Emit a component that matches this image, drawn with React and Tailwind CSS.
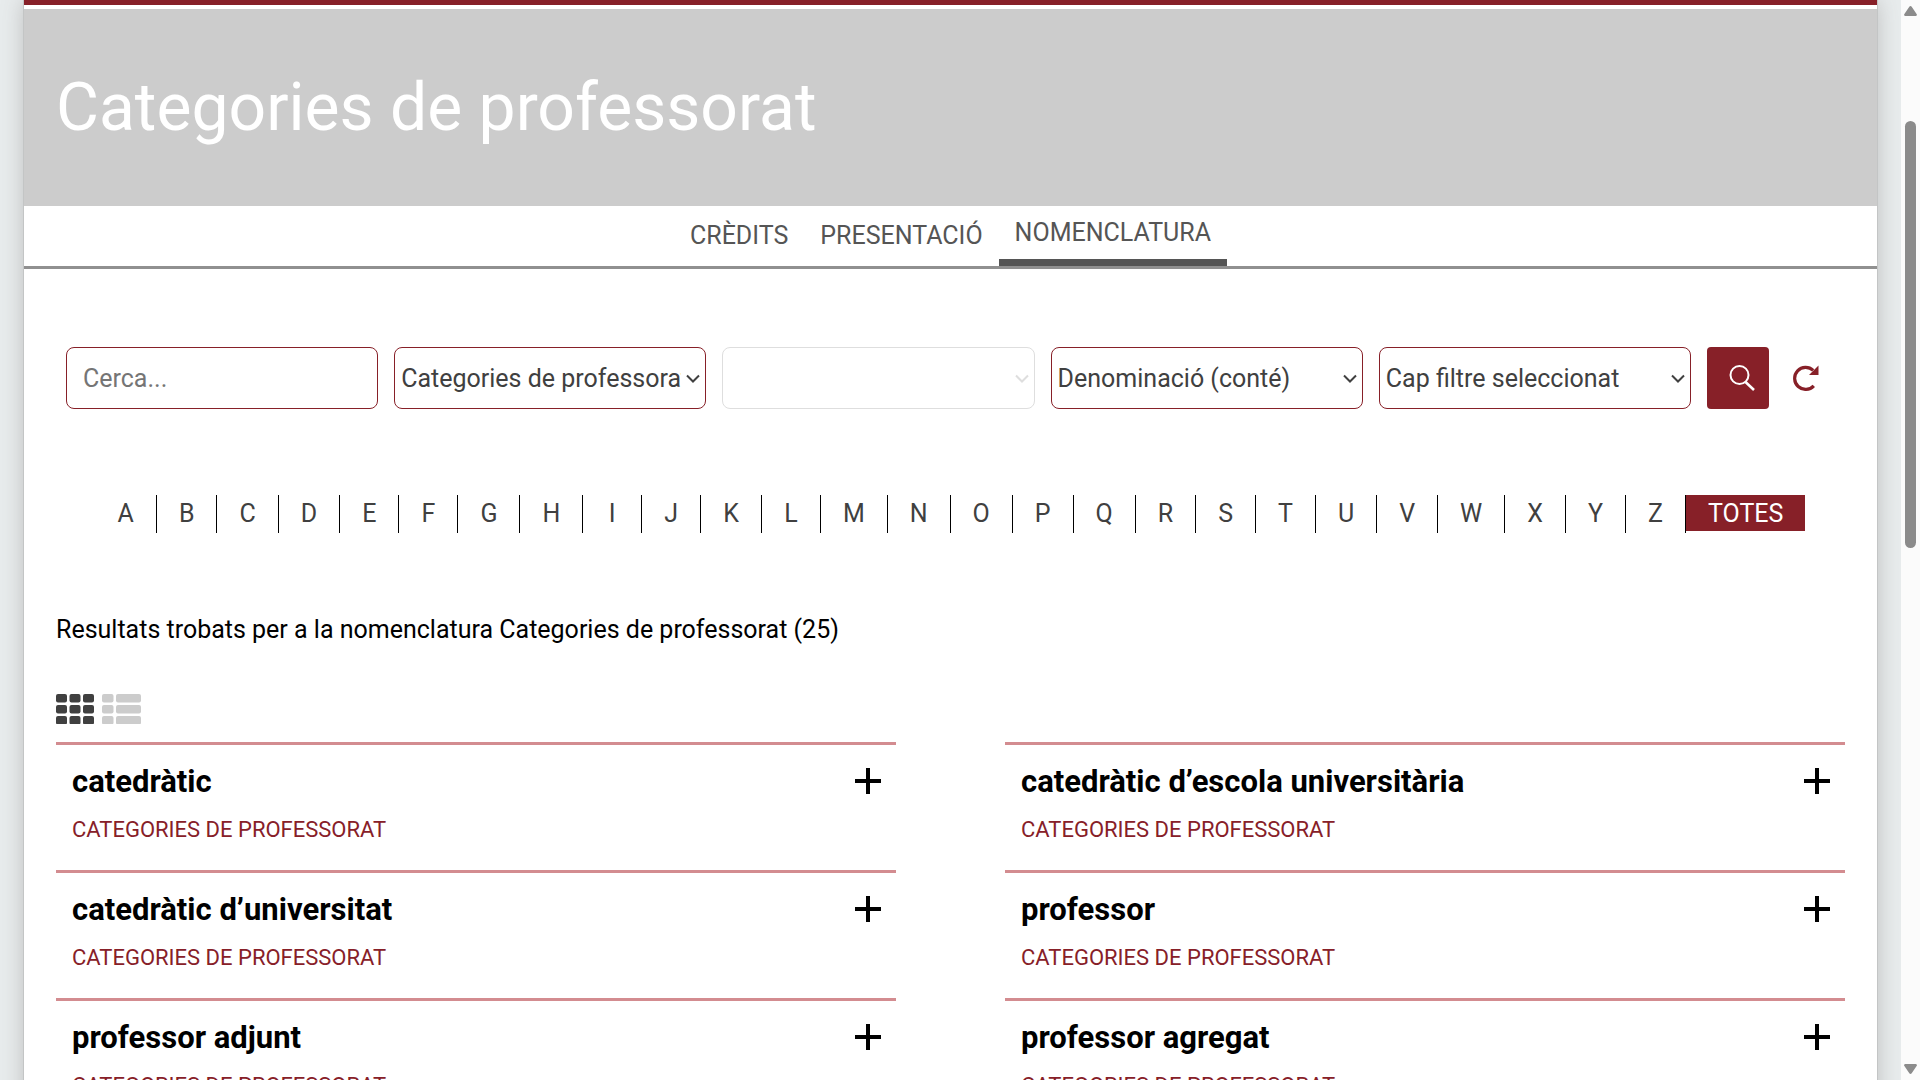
import { useState } from 'react';

const tabs = ['Crèdits', 'Presentació', 'Nomenclatura'];
const letters = 'ABCDEFGHIJKLMNOPQRSTUVWXYZ'.split('');

const terms = [
  'catedràtic',
  'catedràtic d’escola universitària',
  'catedràtic d’universitat',
  'professor',
  'professor adjunt',
  'professor agregat',
];

const Chevron = ({ className }) => (
  <svg className={className} width="14" height="10" viewBox="0 0 14 10" fill="none" stroke="currentColor" strokeWidth="2">
    <path d="M1 1.5 7 7.5 13 1.5" />
  </svg>
);

const SearchIcon = () => (
  <svg width="26" height="26" viewBox="0 0 26 26" fill="none" stroke="currentColor" strokeWidth="2">
    <circle cx="10.5" cy="10" r="9" />
    <path d="M16.5 17 25 25" strokeWidth="2.6" />
  </svg>
);

const ReloadIcon = () => (
  <svg width="26" height="26" viewBox="0 0 26 26" fill="none">
    <path d="M20.2 5.4A11 11 0 1 0 20.8 20.8" stroke="currentColor" strokeWidth="3.2" />
    <path d="M25.5 .5V10H16Z" fill="currentColor" />
  </svg>
);

const PlusIcon = () => (
  <svg width="26" height="26" viewBox="0 0 26 26" fill="none" stroke="currentColor" strokeWidth="4">
    <path d="M13 0V26M0 13H26" />
  </svg>
);

const GridIcon = () => (
  <svg width="38" height="30" viewBox="0 0 38 30" fill="currentColor">
    {[0, 11, 22].map((y) =>
      [0, 13.5, 27].map((x) => <rect key={`${x}-${y}`} x={x} y={y} width="11" height="8.5" rx="2" />)
    )}
  </svg>
);

const ListIcon = () => (
  <svg width="39" height="30" viewBox="0 0 39 30" fill="currentColor">
    {[0, 11, 22].map((y) => (
      <g key={y}>
        <rect x="0" y={y} width="11.5" height="8.5" rx="2" />
        <rect x="14" y={y} width="25" height="8.5" rx="2" />
      </g>
    ))}
  </svg>
);

const Select = ({ label, options, disabled }) => (
  <div className="relative flex-1 min-w-0">
    <select
      aria-label={label}
      disabled={disabled}
      className="appearance-none w-full h-[62px] rounded-lg border border-[#872028] bg-white pt-0.5 pl-[6px] pr-6 text-[25px] text-[#404040] disabled:border-[#dedede]"
    >
      {options.map((option) => (
        <option key={option}>{option}</option>
      ))}
    </select>
    <Chevron
      className={`absolute right-[6px] top-[27px] pointer-events-none ${disabled ? 'text-[#dedede]' : 'text-[#404040]'}`}
    />
  </div>
);

const TermCard = ({ name }) => (
  <article className="h-32 border-t-[3px] border-[#d38c90] pt-[17px] pl-4 pr-[15px]">
    <div className="flex items-center justify-between">
      <h2 className="pt-0.5 text-[31px] leading-9 font-bold">{name}</h2>
      <button type="button" aria-label={`Mostra ${name}`}>
        <PlusIcon />
      </button>
    </div>
    <p className="mt-[14px] text-[22px] leading-8 uppercase text-[#872028]">Categories de professorat</p>
  </article>
);

const Scrollbar = () => (
  <div className="w-[19px] shrink-0 flex flex-col items-center justify-between bg-[#fbfbfb] py-[6px] text-[#8b8b8b]" aria-hidden="true">
    <svg width="13" height="10" viewBox="0 0 13 10" fill="currentColor">
      <path d="M5.3.8a1.5 1.5 0 0 1 2.4 0L12.6 8a1.2 1.2 0 0 1-1 2H1.4a1.2 1.2 0 0 1-1-2Z" />
    </svg>
    <div className="w-[11px] flex-1 pt-[105px]">
      <div className="h-[427px] rounded-full bg-[#8b8b8b]" />
    </div>
    <svg width="13" height="10" viewBox="0 0 13 10" fill="currentColor">
      <path d="M5.3 9.2a1.5 1.5 0 0 0 2.4 0L12.6 2a1.2 1.2 0 0 0-1-2H1.4a1.2 1.2 0 0 0-1 2Z" />
    </svg>
  </div>
);

export default function App() {
  const [activeTab, setActiveTab] = useState('Nomenclatura');
  const [activeLetter, setActiveLetter] = useState('Totes');
  const [query, setQuery] = useState('');

  return (
    <div className="flex h-screen overflow-hidden bg-[#e8eced] font-[Roboto,sans-serif] text-black">
      <div className="flex-1 min-w-0 px-6 overflow-hidden">
        <main className="min-h-screen bg-white shadow-[0_0_0_1px_#c3c5c5,0_0_22px_#bcbcbc]">
          <div className="h-[5px] bg-[#872028]" />

          <header className="mt-1 h-[197px] bg-[#cccccc] px-8 flex items-center">
            <h1 className="text-[66px] leading-[80px] text-white">Categories de professorat</h1>
          </header>

          <nav className="h-[63px] border-b-[3px] border-[#909090] flex justify-center">
            {tabs.map((tab) => (
              <a
                key={tab}
                href="#"
                onClick={() => setActiveTab(tab)}
                className={`px-4 uppercase text-[25px] text-[#555555] flex items-center ${
                  activeTab === tab ? 'border-b-[7px] border-[#555555]' : ''
                }`}
              >
                {tab}
              </a>
            ))}
          </nav>

          {/* Search form */}
          <form className="mt-[78px] pl-[42px] pr-[58px] flex gap-4" onSubmit={(e) => e.preventDefault()}>
            <div className="flex-1 min-w-0">
              <input
                type="text"
                aria-label="Cerca"
                placeholder="Cerca..."
                value={query}
                onChange={(e) => setQuery(e.target.value)}
                className="w-full h-[62px] rounded-lg border border-[#872028] px-4 text-[25px] text-[#404040] placeholder:text-[#757575]"
              />
            </div>
            <Select label="Nomenclatura" options={['Categories de professorat']} />
            <Select label="Subcategoria" options={['']} disabled />
            <Select label="Camp de cerca" options={['Denominació (conté)']} />
            <Select label="Filtre" options={['Cap filtre seleccionat']} />
            <button
              type="submit"
              aria-label="Cerca"
              className="w-[62px] h-[62px] shrink-0 rounded bg-[#872028] pl-2 text-white flex items-center justify-center"
            >
              <SearchIcon />
            </button>
            <button type="reset" aria-label="Reinicia" className="ml-2 text-[#872028]" onClick={() => setQuery('')}>
              <ReloadIcon />
            </button>
          </form>

          {/* Alphabet index */}
          <div className="mt-[86px] flex justify-center items-start text-[25px] leading-[34px] text-[#404040]">
            {letters.map((letter) => (
              <div key={letter} className="h-[38px] border-r border-black">
                <button type="button" className="min-w-[58px] pt-0.5 px-[22px]" onClick={() => setActiveLetter(letter)}>
                  {letter}
                </button>
              </div>
            ))}
            <button
              type="button"
              onClick={() => setActiveLetter('Totes')}
              className={`pt-0.5 px-[22px] uppercase ${activeLetter === 'Totes' ? 'bg-[#872028] text-white' : ''}`}
            >
              Totes
            </button>
          </div>

          {/* Results */}
          <section className="px-8 pt-[81px]">
            <p className="text-[25px] leading-8">Resultats trobats per a la nomenclatura Categories de professorat (25)</p>
            <div className="mt-12 flex gap-2">
              <button type="button" aria-label="Graella" className="text-[#404040]">
                <GridIcon />
              </button>
              <button type="button" aria-label="Llista" className="text-[#cccccc]">
                <ListIcon />
              </button>
            </div>
            <div className="mt-[18px] grid grid-cols-2 gap-x-[109px]">
              {terms.map((name) => (
                <TermCard key={name} name={name} />
              ))}
            </div>
          </section>
        </main>
      </div>
      <Scrollbar />
    </div>
  );
}
